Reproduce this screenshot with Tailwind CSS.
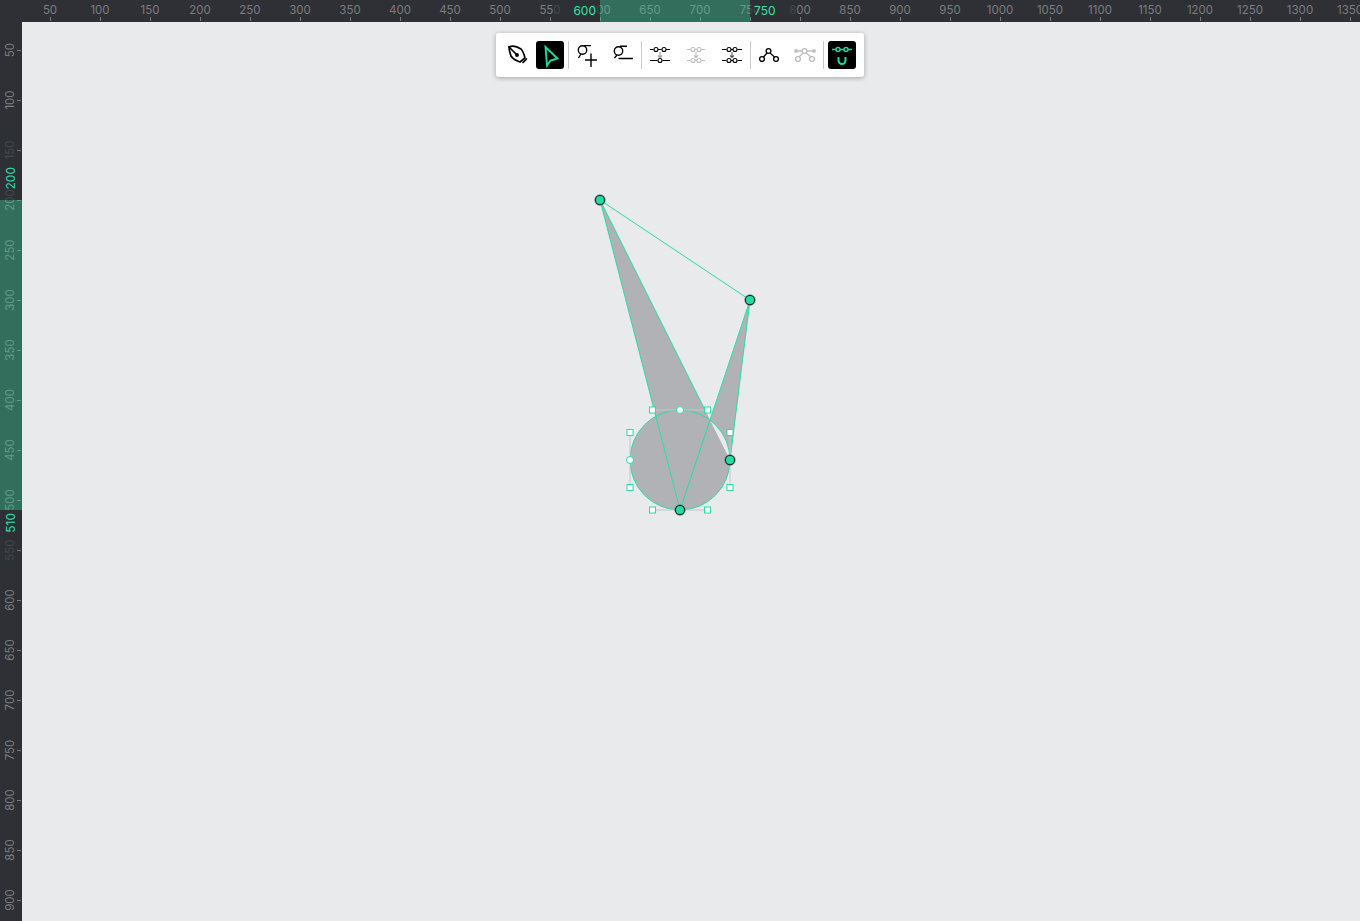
<!DOCTYPE html>
<html><head><meta charset="utf-8"><title>Path editor</title>
<script src="https://cdn.jsdelivr.net/npm/@tailwindcss/browser@4"></script>
</head>
<body class="w-[1360px] h-[921px] overflow-hidden bg-[#2e3035] font-['Inter',sans-serif]">
<div class="relative w-[1360px] h-[921px] overflow-hidden">
  <!-- top ruler -->
  <div class="relative flex h-[22px] pl-[25px] bg-[#2e3035] text-[11.5px] leading-[22px] text-[#7b7d80]">
    <div class="w-[50px] shrink-0 relative text-center"><span class="block -mt-px">50</span><i class="absolute left-[25px] top-[17px] w-px h-[4px] bg-[#77797c]"></i></div>
    <div class="w-[50px] shrink-0 relative text-center"><span class="block -mt-px">100</span><i class="absolute left-[25px] top-[17px] w-px h-[4px] bg-[#77797c]"></i></div>
    <div class="w-[50px] shrink-0 relative text-center"><span class="block -mt-px">150</span><i class="absolute left-[25px] top-[17px] w-px h-[4px] bg-[#77797c]"></i></div>
    <div class="w-[50px] shrink-0 relative text-center"><span class="block -mt-px">200</span><i class="absolute left-[25px] top-[17px] w-px h-[4px] bg-[#77797c]"></i></div>
    <div class="w-[50px] shrink-0 relative text-center"><span class="block -mt-px">250</span><i class="absolute left-[25px] top-[17px] w-px h-[4px] bg-[#77797c]"></i></div>
    <div class="w-[50px] shrink-0 relative text-center"><span class="block -mt-px">300</span><i class="absolute left-[25px] top-[17px] w-px h-[4px] bg-[#77797c]"></i></div>
    <div class="w-[50px] shrink-0 relative text-center"><span class="block -mt-px">350</span><i class="absolute left-[25px] top-[17px] w-px h-[4px] bg-[#77797c]"></i></div>
    <div class="w-[50px] shrink-0 relative text-center"><span class="block -mt-px">400</span><i class="absolute left-[25px] top-[17px] w-px h-[4px] bg-[#77797c]"></i></div>
    <div class="w-[50px] shrink-0 relative text-center"><span class="block -mt-px">450</span><i class="absolute left-[25px] top-[17px] w-px h-[4px] bg-[#77797c]"></i></div>
    <div class="w-[50px] shrink-0 relative text-center"><span class="block -mt-px">500</span><i class="absolute left-[25px] top-[17px] w-px h-[4px] bg-[#77797c]"></i></div>
    <div class="w-[50px] shrink-0 relative text-center"><span class="block -mt-px">550</span><i class="absolute left-[25px] top-[17px] w-px h-[4px] bg-[#77797c]"></i></div>
    <div class="w-[50px] shrink-0 relative text-center"><span class="block -mt-px">600</span><i class="absolute left-[25px] top-[17px] w-px h-[4px] bg-[#77797c]"></i></div>
    <div class="w-[50px] shrink-0 relative text-center"><span class="block -mt-px">650</span><i class="absolute left-[25px] top-[17px] w-px h-[4px] bg-[#77797c]"></i></div>
    <div class="w-[50px] shrink-0 relative text-center"><span class="block -mt-px">700</span><i class="absolute left-[25px] top-[17px] w-px h-[4px] bg-[#77797c]"></i></div>
    <div class="w-[50px] shrink-0 relative text-center"><span class="block -mt-px">750</span><i class="absolute left-[25px] top-[17px] w-px h-[4px] bg-[#77797c]"></i></div>
    <div class="w-[50px] shrink-0 relative text-center"><span class="block -mt-px">800</span><i class="absolute left-[25px] top-[17px] w-px h-[4px] bg-[#77797c]"></i></div>
    <div class="w-[50px] shrink-0 relative text-center"><span class="block -mt-px">850</span><i class="absolute left-[25px] top-[17px] w-px h-[4px] bg-[#77797c]"></i></div>
    <div class="w-[50px] shrink-0 relative text-center"><span class="block -mt-px">900</span><i class="absolute left-[25px] top-[17px] w-px h-[4px] bg-[#77797c]"></i></div>
    <div class="w-[50px] shrink-0 relative text-center"><span class="block -mt-px">950</span><i class="absolute left-[25px] top-[17px] w-px h-[4px] bg-[#77797c]"></i></div>
    <div class="w-[50px] shrink-0 relative text-center"><span class="block -mt-px">1000</span><i class="absolute left-[25px] top-[17px] w-px h-[4px] bg-[#77797c]"></i></div>
    <div class="w-[50px] shrink-0 relative text-center"><span class="block -mt-px">1050</span><i class="absolute left-[25px] top-[17px] w-px h-[4px] bg-[#77797c]"></i></div>
    <div class="w-[50px] shrink-0 relative text-center"><span class="block -mt-px">1100</span><i class="absolute left-[25px] top-[17px] w-px h-[4px] bg-[#77797c]"></i></div>
    <div class="w-[50px] shrink-0 relative text-center"><span class="block -mt-px">1150</span><i class="absolute left-[25px] top-[17px] w-px h-[4px] bg-[#77797c]"></i></div>
    <div class="w-[50px] shrink-0 relative text-center"><span class="block -mt-px">1200</span><i class="absolute left-[25px] top-[17px] w-px h-[4px] bg-[#77797c]"></i></div>
    <div class="w-[50px] shrink-0 relative text-center"><span class="block -mt-px">1250</span><i class="absolute left-[25px] top-[17px] w-px h-[4px] bg-[#77797c]"></i></div>
    <div class="w-[50px] shrink-0 relative text-center"><span class="block -mt-px">1300</span><i class="absolute left-[25px] top-[17px] w-px h-[4px] bg-[#77797c]"></i></div>
    <div class="w-[50px] shrink-0 relative text-center"><span class="block -mt-px">1350</span><i class="absolute left-[25px] top-[17px] w-px h-[4px] bg-[#77797c]"></i></div>
    <!-- selection band -->
    <div class="absolute left-[600px] top-0 w-[150px] h-[22px] bg-[#3dcb99]/40"></div>
    <i class="absolute left-[553px] top-0 w-[47px] h-[17px] bg-[#2e3035]/70"></i>
    <i class="absolute left-[750px] top-0 w-[47px] h-[17px] bg-[#2e3035]/70"></i>
    <span class="absolute right-[764px] top-0 text-[12px] text-[#2fe3ab]">600</span>
    <span class="absolute left-[754px] top-0 text-[12px] text-[#2fe3ab]">750</span>
  </div>
  <div class="flex h-[899px]">
    <!-- left ruler -->
    <div class="relative w-[22px] h-[899px] shrink-0 bg-[#2e3035] text-[11.5px] text-[#7b7d80]">
      <div class="flex flex-col pt-[28px]">
        <div class="h-[50px] relative"><span class="absolute left-[5px] top-0 -translate-y-1/2 [writing-mode:vertical-rl] rotate-180 leading-[11px]">50</span><i class="absolute left-[17px] top-0 w-[4px] h-px bg-[#77797c]"></i></div>
        <div class="h-[50px] relative"><span class="absolute left-[5px] top-0 -translate-y-1/2 [writing-mode:vertical-rl] rotate-180 leading-[11px]">100</span><i class="absolute left-[17px] top-0 w-[4px] h-px bg-[#77797c]"></i></div>
        <div class="h-[50px] relative"><span class="absolute left-[5px] top-0 -translate-y-1/2 [writing-mode:vertical-rl] rotate-180 leading-[11px]">150</span><i class="absolute left-[17px] top-0 w-[4px] h-px bg-[#77797c]"></i></div>
        <div class="h-[50px] relative"><span class="absolute left-[5px] top-0 -translate-y-1/2 [writing-mode:vertical-rl] rotate-180 leading-[11px]">200</span><i class="absolute left-[17px] top-0 w-[4px] h-px bg-[#77797c]"></i></div>
        <div class="h-[50px] relative"><span class="absolute left-[5px] top-0 -translate-y-1/2 [writing-mode:vertical-rl] rotate-180 leading-[11px]">250</span><i class="absolute left-[17px] top-0 w-[4px] h-px bg-[#77797c]"></i></div>
        <div class="h-[50px] relative"><span class="absolute left-[5px] top-0 -translate-y-1/2 [writing-mode:vertical-rl] rotate-180 leading-[11px]">300</span><i class="absolute left-[17px] top-0 w-[4px] h-px bg-[#77797c]"></i></div>
        <div class="h-[50px] relative"><span class="absolute left-[5px] top-0 -translate-y-1/2 [writing-mode:vertical-rl] rotate-180 leading-[11px]">350</span><i class="absolute left-[17px] top-0 w-[4px] h-px bg-[#77797c]"></i></div>
        <div class="h-[50px] relative"><span class="absolute left-[5px] top-0 -translate-y-1/2 [writing-mode:vertical-rl] rotate-180 leading-[11px]">400</span><i class="absolute left-[17px] top-0 w-[4px] h-px bg-[#77797c]"></i></div>
        <div class="h-[50px] relative"><span class="absolute left-[5px] top-0 -translate-y-1/2 [writing-mode:vertical-rl] rotate-180 leading-[11px]">450</span><i class="absolute left-[17px] top-0 w-[4px] h-px bg-[#77797c]"></i></div>
        <div class="h-[50px] relative"><span class="absolute left-[5px] top-0 -translate-y-1/2 [writing-mode:vertical-rl] rotate-180 leading-[11px]">500</span><i class="absolute left-[17px] top-0 w-[4px] h-px bg-[#77797c]"></i></div>
        <div class="h-[50px] relative"><span class="absolute left-[5px] top-0 -translate-y-1/2 [writing-mode:vertical-rl] rotate-180 leading-[11px]">550</span><i class="absolute left-[17px] top-0 w-[4px] h-px bg-[#77797c]"></i></div>
        <div class="h-[50px] relative"><span class="absolute left-[5px] top-0 -translate-y-1/2 [writing-mode:vertical-rl] rotate-180 leading-[11px]">600</span><i class="absolute left-[17px] top-0 w-[4px] h-px bg-[#77797c]"></i></div>
        <div class="h-[50px] relative"><span class="absolute left-[5px] top-0 -translate-y-1/2 [writing-mode:vertical-rl] rotate-180 leading-[11px]">650</span><i class="absolute left-[17px] top-0 w-[4px] h-px bg-[#77797c]"></i></div>
        <div class="h-[50px] relative"><span class="absolute left-[5px] top-0 -translate-y-1/2 [writing-mode:vertical-rl] rotate-180 leading-[11px]">700</span><i class="absolute left-[17px] top-0 w-[4px] h-px bg-[#77797c]"></i></div>
        <div class="h-[50px] relative"><span class="absolute left-[5px] top-0 -translate-y-1/2 [writing-mode:vertical-rl] rotate-180 leading-[11px]">750</span><i class="absolute left-[17px] top-0 w-[4px] h-px bg-[#77797c]"></i></div>
        <div class="h-[50px] relative"><span class="absolute left-[5px] top-0 -translate-y-1/2 [writing-mode:vertical-rl] rotate-180 leading-[11px]">800</span><i class="absolute left-[17px] top-0 w-[4px] h-px bg-[#77797c]"></i></div>
        <div class="h-[50px] relative"><span class="absolute left-[5px] top-0 -translate-y-1/2 [writing-mode:vertical-rl] rotate-180 leading-[11px]">850</span><i class="absolute left-[17px] top-0 w-[4px] h-px bg-[#77797c]"></i></div>
        <div class="h-[50px] relative"><span class="absolute left-[5px] top-0 -translate-y-1/2 [writing-mode:vertical-rl] rotate-180 leading-[11px]">900</span><i class="absolute left-[17px] top-0 w-[4px] h-px bg-[#77797c]"></i></div>
      </div>
      <div class="absolute left-0 top-[178px] w-[22px] h-[310px] bg-[#3dcb99]/40"></div>
      <i class="absolute left-0 top-[115px] w-[17px] h-[63px] bg-[#2e3035]/70"></i>
      <i class="absolute left-0 top-[488px] w-[17px] h-[56px] bg-[#2e3035]/70"></i>
      <span class="absolute left-[5px] top-[145px] [writing-mode:vertical-rl] rotate-180 leading-[11px] text-[12px] text-[#2fe3ab]">200</span>
      <span class="absolute left-[5px] top-[491px] [writing-mode:vertical-rl] rotate-180 leading-[11px] text-[12px] text-[#2fe3ab]">510</span>
    </div>
    <!-- canvas -->
    <div class="relative flex-1 bg-[#e8eaec]">
      <svg class="absolute left-0 top-0" width="1338" height="899" viewBox="22 22 1338 899" fill="none">
        <path d="M600 200L680 510L750 300L730 460Z M730 460A50 50 0 1 0 630 460A50 50 0 1 0 730 460Z" fill="#b1b2b6" fill-rule="nonzero"/>
        <path d="M600 200L750 300" stroke="#2bdca6" stroke-width="1"/>
        <path d="M600 200L680 510L750 300L730 460" stroke="#2bdca6" stroke-width="1"/>
        <path d="M600 200L706 412" stroke="#2bdca6" stroke-width="1"/>
        <circle cx="680" cy="460" r="50" stroke="#2bdca6" stroke-width="1"/>
        <path d="M652.5 510H707.5M630 432.5V487.5M730 432.5V487.5M652.5 410H707.5" stroke="#c4c6c8" stroke-width="1"/>
        <g fill="#fff" stroke="#2bdca6" stroke-width="1">
          <rect x="649.5" y="407" width="6" height="6"/><rect x="704.5" y="407" width="6" height="6"/>
          <rect x="627" y="429.5" width="6" height="6"/><rect x="727" y="429.5" width="6" height="6"/>
          <rect x="627" y="484.5" width="6" height="6"/><rect x="727" y="484.5" width="6" height="6"/>
          <rect x="649.5" y="507" width="6" height="6"/><rect x="704.5" y="507" width="6" height="6"/>
          <circle cx="680" cy="410" r="3.5"/><circle cx="630" cy="460" r="3.5"/>
        </g>
        <g stroke="#8b8d90" stroke-opacity="0.45" stroke-width="1">
          <circle cx="600" cy="200" r="5.6"/><circle cx="750" cy="300" r="5.6"/><circle cx="730" cy="460" r="5.6"/><circle cx="680" cy="510" r="5.6"/>
        </g>
        <g fill="#21dca3" stroke="#17302e" stroke-width="1.2">
          <circle cx="600" cy="200" r="4.6"/><circle cx="750" cy="300" r="4.6"/><circle cx="730" cy="460" r="4.6"/><circle cx="680" cy="510" r="4.6"/>
        </g>
      </svg>
      <!-- toolbar -->
      <div class="absolute left-[474px] top-[11px] flex items-center w-[368px] h-[44px] pl-2 bg-white rounded-[3px] shadow-[0_1px_5px_rgba(0,0,0,0.3)]">
        <button class="w-7 h-7 shrink-0 rounded-[3px]"><svg width="28" height="28" viewBox="0 0 28 28" fill="none" stroke="#000" stroke-width="1.7" stroke-linejoin="round" stroke-linecap="round"><path d="M5 6C9 4 14 6 17 8C19 10 20 13 21 17L16 21C13 20 9 18 7 15C6 12 5 9 5 6Z"/><path d="M5 6L12 13"/><circle cx="13" cy="14" r="1.1" fill="#000"/><path d="M19 21.5L22.5 18"/></svg></button>
        <button class="w-7 h-7 shrink-0 ml-1 rounded-[3px] bg-black"><svg width="28" height="28" viewBox="0 0 28 28" fill="none" stroke="#1fd9a1" stroke-width="1.9" stroke-linejoin="miter"><path d="M9.5 6L21.5 17.5L14.5 19.5L11 24.5Z"/></svg></button>
        <i class="w-px h-7 ml-1 shrink-0 bg-[#c9c9c9]"></i>
        <button class="w-7 h-7 shrink-0 ml-1 rounded-[3px]"><svg width="28" height="28" viewBox="0 0 28 28" fill="none" stroke="#000" stroke-width="1.4"><circle cx="9.5" cy="9" r="4.2"/><path d="M11 4.6H18M8 13L5.5 17M12 19H24M18 12.5V26"/></svg></button>
        <button class="w-7 h-7 shrink-0 ml-2 rounded-[3px]"><svg width="28" height="28" viewBox="0 0 28 28" fill="none" stroke="#000" stroke-width="1.4"><circle cx="9.5" cy="10" r="4.2"/><path d="M11 5.2H18M8 14L5.5 17M9.5 17.5H24"/></svg></button>
        <i class="w-px h-7 ml-1 shrink-0 bg-[#c9c9c9]"></i>
        <button class="w-7 h-7 shrink-0 ml-1 rounded-[3px]"><svg width="28" height="28" viewBox="0 0 28 28" fill="none" stroke="#000" stroke-width="1.1"><path d="M4 8.5H7.5M12 8.5H15.5M20 8.5H24M4 19.5H11.5M16.5 19.5H24"/><circle cx="10" cy="8.5" r="2"/><circle cx="18" cy="8.5" r="2"/><circle cx="14" cy="19.5" r="2"/><path d="M14 11V16.5M12 14.5L14 16.5L16 14.5" stroke="#9a9a9a"/></svg></button>
        <button class="w-7 h-7 shrink-0 ml-2 rounded-[3px]"><svg width="28" height="28" viewBox="0 0 28 28" fill="none" stroke="#bdbdbd" stroke-width="1.1"><path d="M5 8.5H8.5M13 8.5H15M19.5 8.5H23M5 19.5H8.5M13 19.5H15M19.5 19.5H23"/><circle cx="11" cy="8.5" r="2"/><circle cx="17" cy="8.5" r="2"/><circle cx="11" cy="19.5" r="2"/><circle cx="17" cy="19.5" r="2"/><path d="M14 11V16.5M12 14.5L14 16.5L16 14.5"/></svg></button>
        <button class="w-7 h-7 shrink-0 ml-2 rounded-[3px]"><svg width="28" height="28" viewBox="0 0 28 28" fill="none" stroke="#000" stroke-width="1.1"><path d="M4 8.5H8.5M13 8.5H15M19.5 8.5H24M4 19.5H8.5M13 19.5H15M19.5 19.5H24"/><circle cx="11" cy="8.5" r="2"/><circle cx="17" cy="8.5" r="2"/><circle cx="11" cy="19.5" r="2"/><circle cx="17" cy="19.5" r="2"/><path d="M14 11V16.5M12 14.5L14 16.5L16 14.5" stroke="#555"/></svg></button>
        <i class="w-px h-7 ml-1 shrink-0 bg-[#c9c9c9]"></i>
        <button class="w-7 h-7 shrink-0 ml-1 rounded-[3px]"><svg width="28" height="28" viewBox="0 0 28 28" fill="none" stroke="#000" stroke-width="1.3"><circle cx="13.5" cy="10" r="2.4"/><circle cx="7" cy="18" r="2.4"/><circle cx="21" cy="18" r="2.4"/><path d="M12 12L8.5 16M15 12L19.5 16"/></svg></button>
        <button class="w-7 h-7 shrink-0 ml-2 rounded-[3px]"><svg width="28" height="28" viewBox="0 0 28 28" fill="none" stroke="#bdbdbd" stroke-width="1.3"><circle cx="13.5" cy="10" r="2.4"/><circle cx="7" cy="18" r="2.4"/><circle cx="21" cy="18" r="2.4"/><path d="M11 10H5M16 10H22M12 12L8 16M15 12L20 16"/><rect x="4" y="9" width="2" height="2" fill="#bdbdbd"/><rect x="22" y="9" width="2" height="2" fill="#bdbdbd"/></svg></button>
        <i class="w-px h-7 ml-1 shrink-0 bg-[#c9c9c9]"></i>
        <button class="w-7 h-7 shrink-0 ml-1 rounded-[3px] bg-black"><svg width="28" height="28" viewBox="0 0 28 28" fill="none" stroke="#1fd9a1" stroke-width="1.4"><path d="M4 8.5H8M12 8.5H16M20 8.5H24"/><circle cx="10" cy="8.5" r="2"/><circle cx="18" cy="8.5" r="2"/><path d="M10.5 16V19.5A3.5 3.5 0 0 0 17.5 19.5V16" stroke-width="2"/></svg></button>
      </div>
    </div>
  </div>
</div>
</body></html>
